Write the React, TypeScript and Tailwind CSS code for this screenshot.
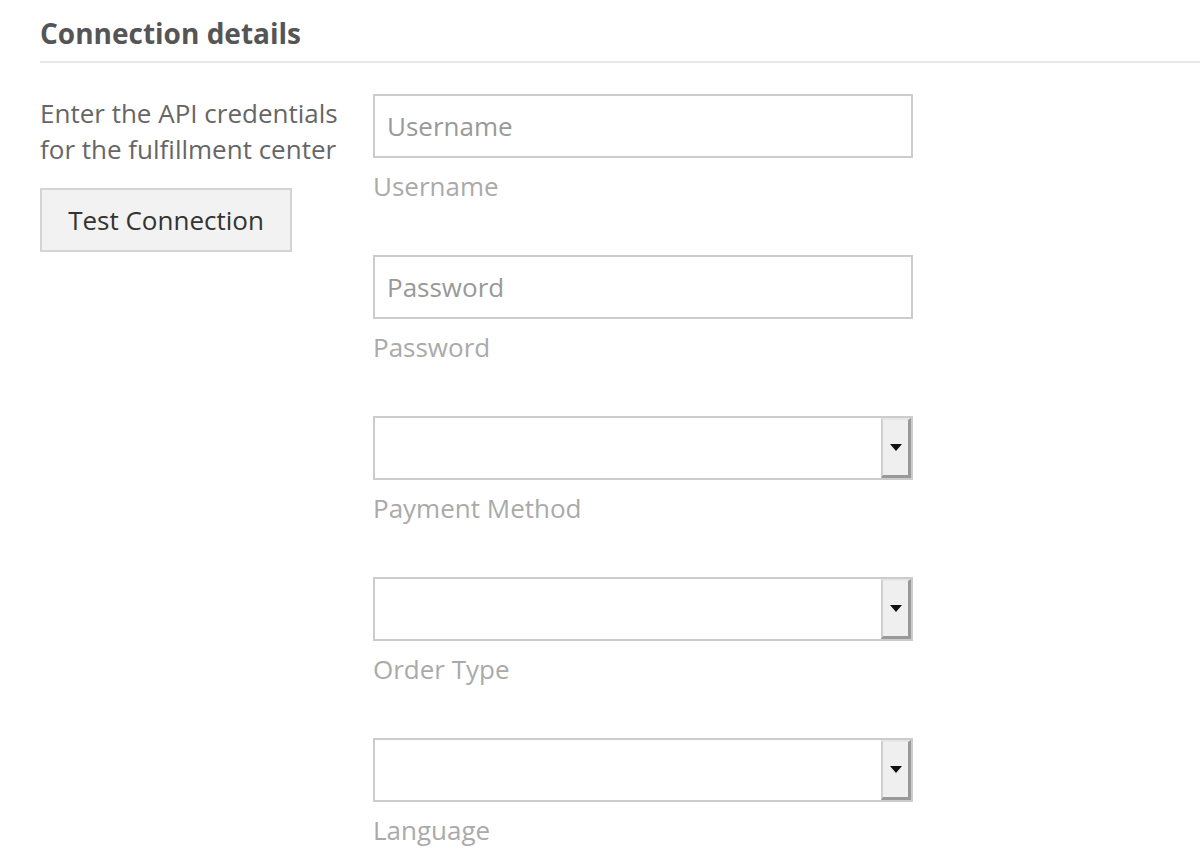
import React from 'react';

const font = { fontFamily: '"Open Sans", "Noto Sans", sans-serif' };

function TextField({ placeholder, label }: { placeholder: string; label: string }) {
  return (
    <div className="flex flex-col">
      <input
        placeholder={placeholder}
        className="h-[64px] w-[540px] border-2 border-[#cccccc] bg-white px-[12px] text-[26px] text-[#333] outline-none placeholder:text-[#999]"
        style={font}
      />
      <span className="mt-[10px] h-[36px] text-[26px] leading-[36px] text-[#aaaaaa]">{label}</span>
    </div>
  );
}

function SelectField({ label }: { label: string }) {
  return (
    <div className="flex flex-col">
      <div className="flex h-[64px] w-[540px] justify-end border-2 border-[#cccccc] bg-white">
        <span className="flex w-[30px] items-center justify-center border-t-2 border-l-2 border-r-[3px] border-b-[3px] border-t-[#e6e6e6] border-l-[#d0d0d0] border-r-[#999] border-b-[#999] bg-[#efefef]">
          <svg width="12" height="7" viewBox="0 0 12 7">
            <polygon points="0,0 12,0 6,7" fill="#111" />
          </svg>
        </span>
      </div>
      <span className="mt-[10px] h-[36px] text-[26px] leading-[36px] text-[#aaaaaa]">{label}</span>
    </div>
  );
}

export default function App() {
  return (
    <div className="min-h-screen bg-white pl-[40px]" style={font}>
      <div className="border-b-2 border-[#e8e8e8] pt-[15px] pb-[10px]">
        <h2 className="text-[28px] font-bold leading-[36px] text-[#555]">Connection details</h2>
      </div>
      <div className="mt-[31px] flex gap-[38px]">
        <div className="flex w-[295px] flex-col">
          <p className="mt-[1px] whitespace-nowrap text-[26px] leading-[36px] text-[#666]">
            Enter the API credentials
            <br />
            for the fulfillment center
          </p>
          <button className="mt-[21px] h-[64px] w-[252px] border-2 border-[#d4d4d4] bg-[#f2f2f2] text-[26px] text-[#333]">
            Test Connection
          </button>
        </div>
        <div className="flex flex-col gap-[51px]">
          <TextField placeholder="Username" label="Username" />
          <TextField placeholder="Password" label="Password" />
          <SelectField label="Payment Method" />
          <SelectField label="Order Type" />
          <SelectField label="Language" />
        </div>
      </div>
    </div>
  );
}
